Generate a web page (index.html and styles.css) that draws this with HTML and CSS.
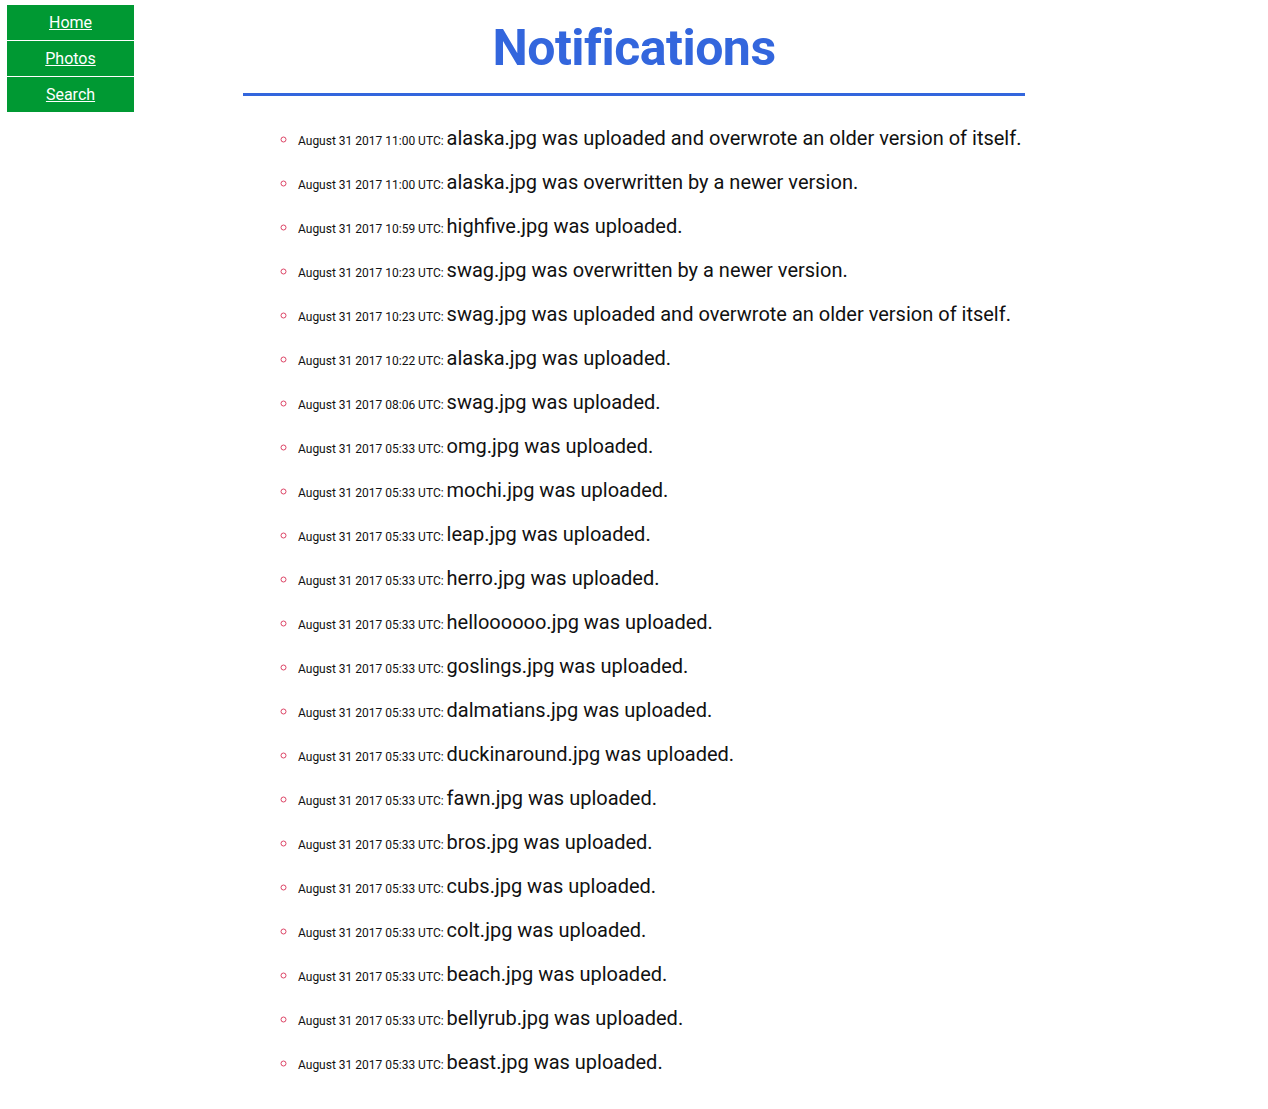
FILE: index.html
```html
<!DOCTYPE html>
<html>
<head>
<meta charset="utf-8">
<title>Notifications</title>
<link rel="stylesheet" href="styles.css">
</head>
<body>
<div class="page">
  <nav class="nav">
    <a class="nav-item" href="#">Home</a>
    <a class="nav-item" href="#">Photos</a>
    <a class="nav-item" href="#">Search</a>
  </nav>
  <main class="main">
    <h1 class="title">Notifications</h1>
    <ul class="list">
      <li class="item"><span class="date">August 31 2017 11:00 UTC: </span><span class="msg">alaska.jpg was uploaded and overwrote an older version of itself.</span></li>
      <li class="item"><span class="date">August 31 2017 11:00 UTC: </span><span class="msg">alaska.jpg was overwritten by a newer version.</span></li>
      <li class="item"><span class="date">August 31 2017 10:59 UTC: </span><span class="msg">highfive.jpg was uploaded.</span></li>
      <li class="item"><span class="date">August 31 2017 10:23 UTC: </span><span class="msg">swag.jpg was overwritten by a newer version.</span></li>
      <li class="item"><span class="date">August 31 2017 10:23 UTC: </span><span class="msg">swag.jpg was uploaded and overwrote an older version of itself.</span></li>
      <li class="item"><span class="date">August 31 2017 10:22 UTC: </span><span class="msg">alaska.jpg was uploaded.</span></li>
      <li class="item"><span class="date">August 31 2017 08:06 UTC: </span><span class="msg">swag.jpg was uploaded.</span></li>
      <li class="item"><span class="date">August 31 2017 05:33 UTC: </span><span class="msg">omg.jpg was uploaded.</span></li>
      <li class="item"><span class="date">August 31 2017 05:33 UTC: </span><span class="msg">mochi.jpg was uploaded.</span></li>
      <li class="item"><span class="date">August 31 2017 05:33 UTC: </span><span class="msg">leap.jpg was uploaded.</span></li>
      <li class="item"><span class="date">August 31 2017 05:33 UTC: </span><span class="msg">herro.jpg was uploaded.</span></li>
      <li class="item"><span class="date">August 31 2017 05:33 UTC: </span><span class="msg">helloooooo.jpg was uploaded.</span></li>
      <li class="item"><span class="date">August 31 2017 05:33 UTC: </span><span class="msg">goslings.jpg was uploaded.</span></li>
      <li class="item"><span class="date">August 31 2017 05:33 UTC: </span><span class="msg">dalmatians.jpg was uploaded.</span></li>
      <li class="item"><span class="date">August 31 2017 05:33 UTC: </span><span class="msg">duckinaround.jpg was uploaded.</span></li>
      <li class="item"><span class="date">August 31 2017 05:33 UTC: </span><span class="msg">fawn.jpg was uploaded.</span></li>
      <li class="item"><span class="date">August 31 2017 05:33 UTC: </span><span class="msg">bros.jpg was uploaded.</span></li>
      <li class="item"><span class="date">August 31 2017 05:33 UTC: </span><span class="msg">cubs.jpg was uploaded.</span></li>
      <li class="item"><span class="date">August 31 2017 05:33 UTC: </span><span class="msg">colt.jpg was uploaded.</span></li>
      <li class="item"><span class="date">August 31 2017 05:33 UTC: </span><span class="msg">beach.jpg was uploaded.</span></li>
      <li class="item"><span class="date">August 31 2017 05:33 UTC: </span><span class="msg">bellyrub.jpg was uploaded.</span></li>
      <li class="item"><span class="date">August 31 2017 05:33 UTC: </span><span class="msg">beast.jpg was uploaded.</span></li>
    </ul>
  </main>
</div>
</body>
</html>
```
FILE: styles.css
```css
html, body {
  margin: 0;
  padding: 0;
  background: #ffffff;
  font-family: Roboto, "Liberation Sans", sans-serif;
}

.page {
  display: grid;
  grid-template-columns: 243px 782px 1fr;
}

.nav {
  display: flex;
  flex-direction: column;
  gap: 1px;
  width: 127px;
  margin: 5px 0 0 7px;
  align-self: start;
}

.nav-item {
  display: block;
  height: 35px;
  line-height: 35px;
  background: #009933;
  color: #ffffff;
  text-align: center;
  font-size: 16px;
  text-decoration: underline;
}

.main {
  display: flex;
  flex-direction: column;
}

.title {
  margin: 0;
  height: 96px;
  padding-top: 18px;
  box-sizing: border-box;
  text-align: center;
  font-size: 50px;
  font-weight: 700;
  letter-spacing: -0.5px;
  line-height: 60px;
  color: #3366dd;
  border-bottom: 3px solid #3366dd;
}

.list {
  list-style: circle;
  margin: 0;
  padding: 20px 0 0 55px;
}

.item {
  height: 44px;
  line-height: 44px;
  color: #111111;
}

.item::marker {
  color: #dd4466;
  font-size: 16px;
}

.date {
  font-size: 12px;
}

.msg {
  font-size: 20px;
}
```
